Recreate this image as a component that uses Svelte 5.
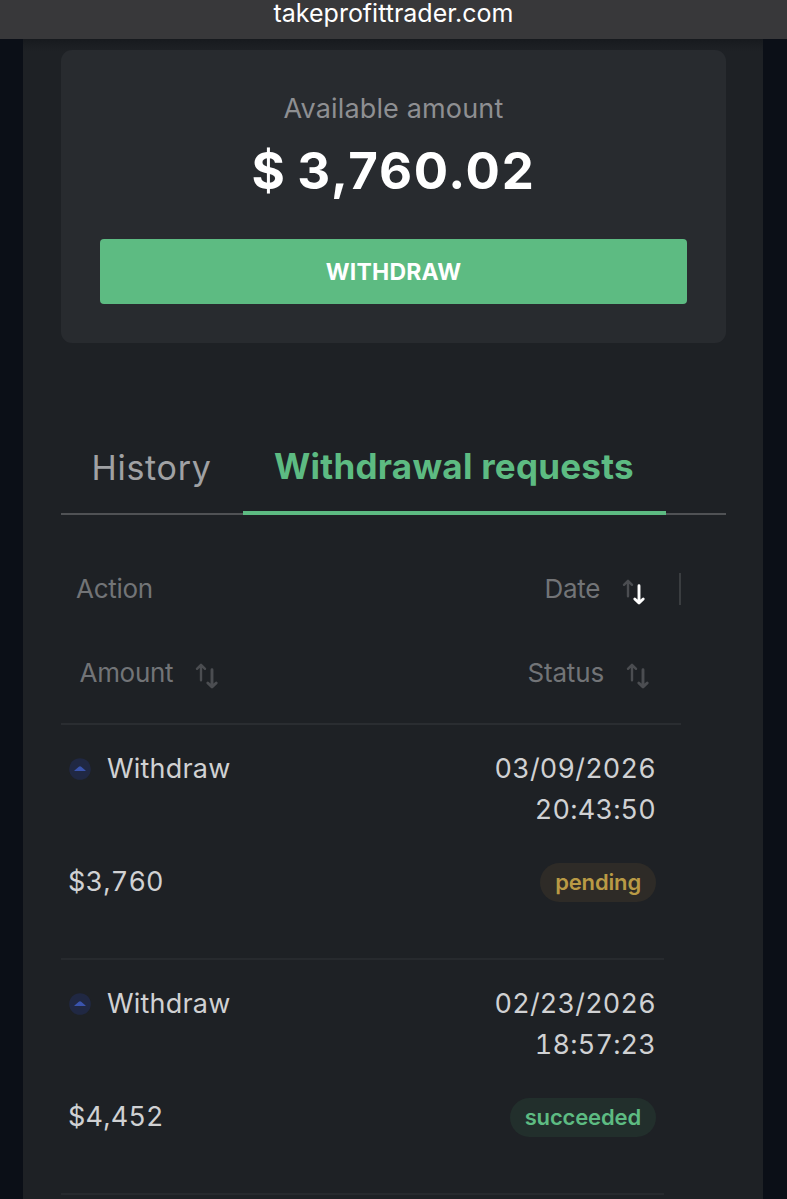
<script>
  const rows = [
    { action: 'Withdraw', date: '03/09/2026', time: '20:43:50', amount: '$3,760', status: 'pending' },
    { action: 'Withdraw', date: '02/23/2026', time: '18:57:23', amount: '$4,452', status: 'succeeded' }
  ];
</script>

{#snippet sort(desc)}
  <svg class="sort" width="24" height="28" viewBox="0 0 24 28" fill="none" stroke-linecap="round" stroke-linejoin="round">
    <path d="M6 18.3V3M2 6.8L6 2.8L10 6.8" stroke="#4b4d51" stroke-width="2.4" />
    <path d="M17 7.7V24.3M12.8 21L17 25L21.2 21" stroke={desc ? '#ffffff' : '#4b4d51'} stroke-width="2.9" />
  </svg>
{/snippet}

<div class="page">
  <header>takeprofittrader.com</header>
  <main>
    <section class="card">
      <div class="label"><span>Available amount</span></div>
      <div class="total"><span>$ 3,760.02</span></div>
      <button>WITHDRAW</button>
    </section>

    <nav>
      <div class="tab"><span>History</span></div>
      <div class="tab active"><span>Withdrawal requests</span></div>
    </nav>

    <div class="head">
      <div class="line first">
        <span class="action">Action</span>
        <div class="col date"><span>Date</span>{@render sort(true)}</div>
      </div>
      <div class="line second">
        <div class="col amount"><span>Amount</span>{@render sort(false)}</div>
        <div class="col status"><span>Status</span>{@render sort(false)}</div>
      </div>
    </div>

    {#each rows as row}
      <article>
        <div class="top">
          <div class="kind">
            <svg width="22" height="22" viewBox="0 0 22 22"><circle cx="11" cy="11" r="10.8" fill="#202843" /><path d="M5.3 12.9Q5.3 12.5 6 12L9.8 8.8Q11 7.9 12.2 8.8L16 12Q16.7 12.5 16.7 12.9Z" fill="#3a54ad" /></svg>
            <span>{row.action}</span>
          </div>
          <div class="when"><span>{row.date}</span><span>{row.time}</span></div>
        </div>
        <div class="bottom">
          <span class="money">{row.amount}</span>
          <span class="pill {row.status}">{row.status}</span>
        </div>
      </article>
    {/each}
  </main>
</div>

<style>
  :global(body) { margin: 0; background: #0b0f17; }
  .page {
    height: 1199px;
    overflow: hidden;
    font-family: Inter, "Liberation Sans", sans-serif;
    font-weight: 400;
    color: #d0d1d3;
    background: #0b0f17;
    white-space: nowrap;
  }
  * { box-sizing: border-box; }
  header {
    height: 39px;
    background: #38383a;
    color: #fff;
    text-align: center;
    font-size: 25px;
    font-weight: 400;
    line-height: 27px;
  }
  main {
    height: 1160px;
    margin: 0 24px 0 23px;
    padding: 11px 37px 0 38px;
    background: linear-gradient(#171a1e, #1e2125 12px);
  }
  .card {
    height: 293px;
    padding: 39px 39px 0;
    border-radius: 11px;
    background: #282b2f;
    text-align: center;
  }
  .label { font-size: 27px; line-height: 40px; letter-spacing: 0.15px; color: #8e8f92; }
  .total { font-size: 51px; line-height: 84px; font-weight: 700; letter-spacing: 1.7px; word-spacing: -3px; color: #fff; }
  button {
    display: block;
    width: 100%;
    height: 65px;
    margin-top: 26px;
    padding: 0;
    border: 0;
    border-radius: 4px;
    background: #5dbb82;
    color: #fff;
    font: 650 23px/67px Inter, "Liberation Sans", sans-serif;
    letter-spacing: 0.2px;
  }
  nav {
    display: flex;
    height: 98px;
    margin-top: 74px;
    background: linear-gradient(#505255, #505255) 0 96px / 100% 2px no-repeat;
  }
  .tab {
    width: 182px;
    height: 98px;
    padding: 0 30.5px;
    line-height: 101px;
    font-size: 34px;
    letter-spacing: 0.7px;
    color: #a0a1a4;
  }
  .active {
    width: 423px;
    padding: 0 31px;
    line-height: 98px;
    font-size: 35px;
    font-weight: 700;
    letter-spacing: 0.25px;
    color: #5dbb82;
    border-bottom: 4px solid #5dbb82;
  }
  .head {
    width: 620px;
    height: 210px;
    padding-top: 58px;
    border-bottom: 2px solid #2a2d31;
    font-size: 26px;
    letter-spacing: -0.3px;
    color: #727477;
  }
  .line { display: flex; justify-content: space-between; height: 32px; line-height: 32px; }
  .first { padding-left: 15px; border-right: 2px solid #3a3d40; }
  .second { margin-top: 52px; padding-left: 18.5px; }
  .col { display: flex; }
  .sort { margin: 5px 0 0 22px; }
  .date { padding-right: 33px; }
  .status { padding-right: 31px; }
  .status span { letter-spacing: -0.15px; }
  article {
    width: 603px;
    height: 235px;
    padding: 23px 8px 0;
    border-bottom: 2px solid #272a2e;
    font-size: 27px;
    letter-spacing: 0.2px;
    font-variant-numeric: tabular-nums;
  }
  .top, .bottom { display: flex; justify-content: space-between; }
  .kind, .when { line-height: 41px; }
  .kind { display: flex; height: 41px; align-items: center; gap: 16px; }
  .when { display: flex; flex-direction: column; align-items: flex-end; }
  .bottom { margin-top: 33px; align-items: center; line-height: 39px; }
  .money { position: relative; top: -1px; left: -1px; }
  .pill {
    height: 39px;
    padding: 0 15px;
    border-radius: 20px;
    font-size: 22px;
    font-weight: 600;
    letter-spacing: -0.15px;
  }
  .pending { color: #b99a45; background: #2e2b27; }
  .succeeded { color: #5dbb82; background: #222f2c; }
</style>
